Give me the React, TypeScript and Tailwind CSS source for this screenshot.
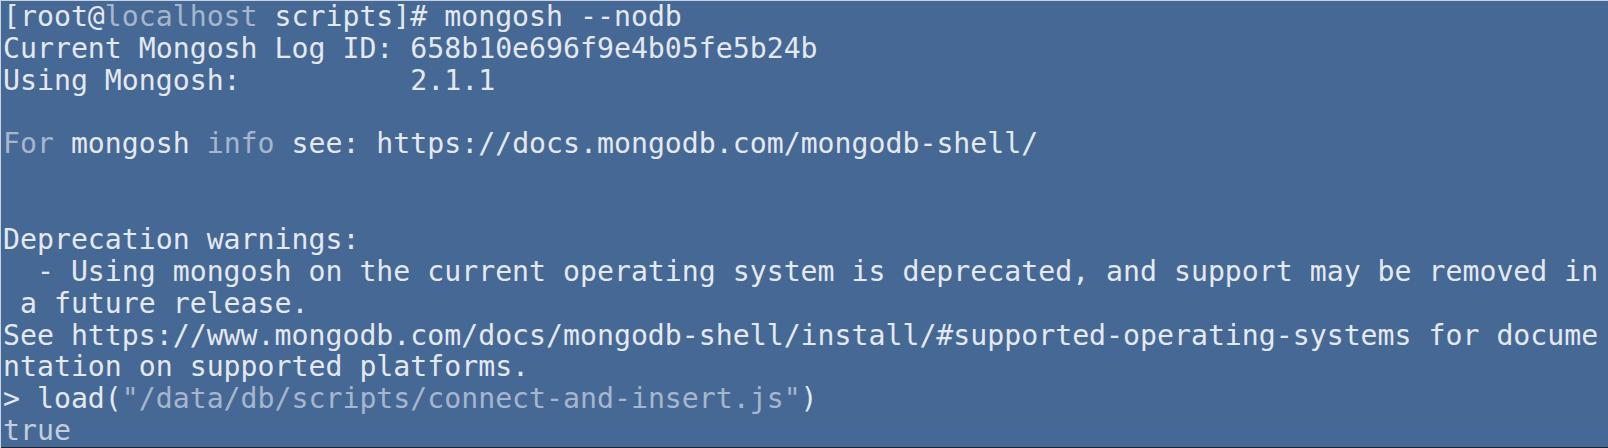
import React from "react";

type Seg = { t: string; tone?: "dim" | "mid" };

const lines: Seg[][] = [
  [{ t: "[root@" }, { t: "localhost", tone: "dim" }, { t: " scripts]# mongosh --nodb" }],
  [{ t: "Current Mongosh Log ID: 658b10e696f9e4b05fe5b24b" }],
  [{ t: "Using Mongosh:          2.1.1" }],
  [],
  [
    { t: "For", tone: "dim" },
    { t: " mongosh " },
    { t: "info", tone: "dim" },
    { t: " see: https://docs.mongodb.com/mongodb-shell/" },
  ],
  [],
  [],
  [{ t: "Deprecation warnings:" }],
  [{ t: "  - Using mongosh on the current operating system is deprecated, and support may be removed in" }],
  [{ t: " a future release." }],
  [{ t: "See https://www.mongodb.com/docs/mongodb-shell/install/#supported-operating-systems for docume" }],
  [{ t: "ntation on supported platforms." }],
  [{ t: "> load(" }, { t: '"/data/db/scripts/connect-and-insert.js"', tone: "dim" }, { t: ")" }],
  [{ t: "true", tone: "mid" }],
];

const toneClass = (tone?: Seg["tone"]) =>
  tone === "dim" ? "text-[#a6b6cc]" : tone === "mid" ? "text-[#c3cedc]" : "";

export default function App() {
  return (
    <div className="w-[1608px] h-[448px] overflow-hidden bg-[#466895] border-t border-l border-[#c9d2de] flex flex-col">
      {/* terminal output */}
      <div
        className="flex-1 px-[2px] text-[28.2px] leading-[31.87px] text-[#e4e9f0] whitespace-pre"
        style={{ fontFamily: '"DejaVu Sans Mono", monospace' }}
      >
        {lines.map((segs, i) => (
          <div key={i} className="h-[31.87px]">
            {segs.map((s, j) => (
              <span key={j} className={toneClass(s.tone)}>
                {s.t}
              </span>
            ))}
          </div>
        ))}
      </div>
      <div className="h-[2px] bg-[#1c2430]" />
      <div className="h-[1px] bg-[#dfe4ea]" />
    </div>
  );
}
